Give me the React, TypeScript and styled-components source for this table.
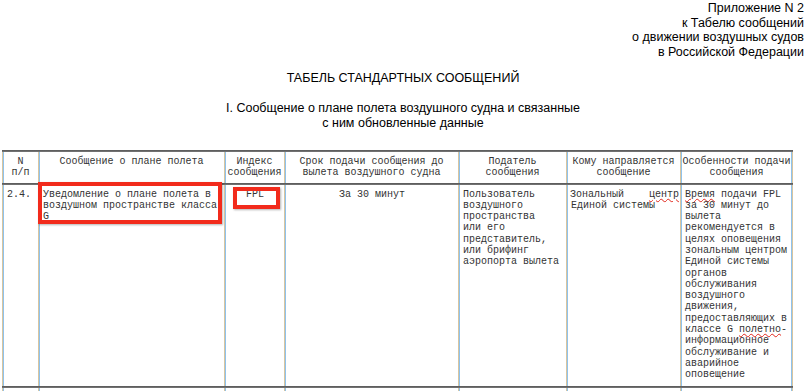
import React from "react";
import styled, { createGlobalStyle } from "styled-components";

const GlobalStyle = createGlobalStyle`
  html, body { margin: 0; padding: 0; background: #fff; }
  body { width: 806px; height: 391px; overflow: hidden; }
`;

const Page = styled.div`
  font-family: "Liberation Sans", Arial, sans-serif;
  font-size: 12.5px;
  color: #000;
  padding-top: 1px;
`;

const Annex = styled.div`
  text-align: right;
  padding-right: 2px;
  line-height: 14.5px;
`;

const Title = styled.div`
  text-align: center;
  margin-top: 12px;
  line-height: 14px;
`;

const Subtitle = styled.div`
  text-align: center;
  margin-top: 16px;
  line-height: 15px;
`;

const Table = styled.div`
  margin: 19px 0 0 2px;
  width: 791px;
  display: grid;
  grid-template-columns: 36px 186px 60px 174px 108px 114px 113px;
  font-family: "Liberation Mono", "Courier New", monospace;
  font-size: 10px;
  color: #333;
`;

const Rule = styled.div`
  grid-column: 1 / -1;
  height: 2px;
  background: linear-gradient(#555, #7a7a7a);
`;

const Cell = styled.div<{ $last?: boolean }>`
  box-sizing: border-box;
  border-left: 1px solid #d8c59f;
  box-shadow: inset 1px 0 0 #8fc2ec${(p) => (p.$last ? ", inset -1px 0 0 #8fc2ec" : "")};
  ${(p) => (p.$last ? "border-right: 1px solid #d8c59f;" : "")}
`;

const HeadCell = styled(Cell)`
  height: 31px;
  padding: 4px 1px 0;
  line-height: 11px;
  text-align: center;
`;

const BodyCell = styled(Cell)<{ $center?: boolean }>`
  position: relative;
  padding: 3.5px 3px 5px 4px;
  line-height: 11.3px;
  text-align: ${(p) => (p.$center ? "center" : "left")};
`;

const TailCell = styled(Cell)`
  height: 8px;
`;

const Line = styled.div`
  white-space: pre;
`;

const JustLine = styled.div`
  display: flex;
  justify-content: space-between;
  margin-right: -2px;
  margin-left: -1px;
`;

const Squiggle = styled.span`
  text-decoration: underline wavy #e0261b;
  text-decoration-thickness: 1px;
  text-underline-offset: 1px;
`;

const Mark = styled.div<{ $l: number; $t: number; $w: number; $h: number }>`
  position: absolute;
  left: ${(p) => p.$l}px;
  top: ${(p) => p.$t}px;
  width: ${(p) => p.$w}px;
  height: ${(p) => p.$h}px;
  box-sizing: border-box;
  border: 4px solid #f22b1c;
  box-shadow: 1px 1px 2px rgba(0, 0, 0, 0.3);
  pointer-events: none;
`;

const headers: string[][] = [
  ["N", "п/п"],
  ["Сообщение о плане полета"],
  ["Индекс", "сообщения"],
  ["Срок подачи сообщения до", "вылета воздушного судна"],
  ["Податель", "сообщения"],
  ["Кому направляется", "сообщение"],
  ["Особенности подачи", "сообщения"],
];

const lines = (arr: string[]) => arr.map((t, i) => <Line key={i}>{t}</Line>);

export default function App() {
  return (
    <>
      <GlobalStyle />
      <Page>
        <Annex>
          <div>Приложение N 2</div>
          <div>к Табелю сообщений</div>
          <div>о движении воздушных судов</div>
          <div>в Российской Федерации</div>
        </Annex>
        <Title>ТАБЕЛЬ СТАНДАРТНЫХ СООБЩЕНИЙ</Title>
        <Subtitle>
          <div>I. Сообщение о плане полета воздушного судна и связанные</div>
          <div>с ним обновленные данные</div>
        </Subtitle>
        <Table>
          <Rule />
          {headers.map((h, i) => (
            <HeadCell key={i} $last={i === headers.length - 1}>
              {lines(h)}
            </HeadCell>
          ))}
          <Rule />
          <BodyCell>{lines(["2.4."])}</BodyCell>
          <BodyCell>
            {lines(["Уведомление о плане полета в", "воздушном пространстве класса", "G"])}
            <Mark $l={-1} $t={-3} $w={184} $h={42} />
          </BodyCell>
          <BodyCell $center>
            {lines(["FPL"])}
            <Mark $l={8} $t={2} $w={47} $h={22} />
          </BodyCell>
          <BodyCell $center>{lines(["За 30 минут"])}</BodyCell>
          <BodyCell>
            {lines([
              "Пользователь",
              "воздушного",
              "пространства",
              "или его",
              "представитель,",
              "или брифинг",
              "аэропорта вылета",
            ])}
          </BodyCell>
          <BodyCell>
            <JustLine>
              <span>Зональный</span>
              <Squiggle>центр</Squiggle>
            </JustLine>
            <Line>Единой системы</Line>
          </BodyCell>
          <BodyCell $last>
            <Line>
              <Squiggle>Время</Squiggle> подачи FPL
            </Line>
            {lines([
              "за 30 минут до",
              "вылета",
              "рекомендуется в",
              "целях оповещения",
              "зональным центром",
              "Единой системы",
              "органов",
              "обслуживания",
              "воздушного",
              "движения,",
              "предоставляющих в",
            ])}
            <Line>
              классе G <Squiggle>полетно</Squiggle>-
            </Line>
            {lines(["информационное", "обслуживание и", "аварийное", "оповещение"])}
          </BodyCell>
          <Rule />
          {headers.map((_, i) => (
            <TailCell key={i} $last={i === headers.length - 1} />
          ))}
        </Table>
      </Page>
    </>
  );
}
